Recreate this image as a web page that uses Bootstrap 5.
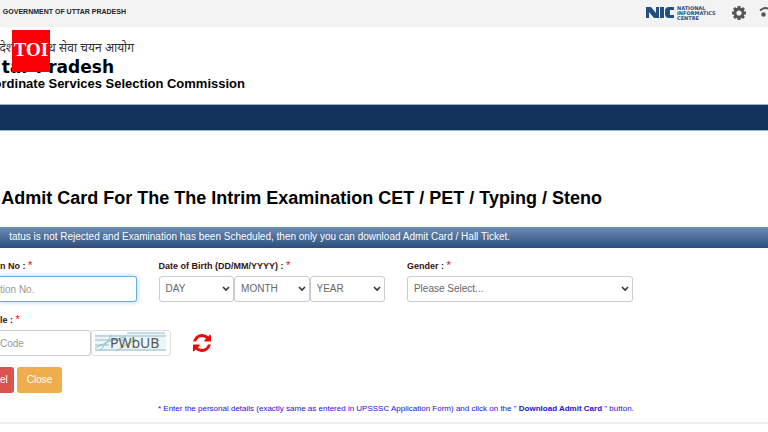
<!DOCTYPE html>
<html lang="en">
<head>
<meta charset="utf-8">
<meta name="viewport" content="width=device-width, initial-scale=1">
<title>Download Admit Card</title>
<link href="https://cdn.jsdelivr.net/npm/bootstrap@5.3.0/dist/css/bootstrap.min.css" rel="stylesheet">
<style>
body{font-family:"Liberation Sans",Arial,"Noto Sans",sans-serif;font-size:10px;line-height:16px;color:#000;overflow-x:hidden}
.topbar{height:27px;background:#f3f3f3}
.gov{width:126px;font-size:7px;font-weight:700;line-height:24px;color:#222}
.nic-logo{width:74px;height:16px}
.tools{gap:12px;height:25px}
.brand-area{height:77px;padding-top:11px}
.brand-hi{width:134px;font-size:12px;line-height:20px;color:#333}
.brand-state{width:114px;font:700 17px/18px "DejaVu Sans",sans-serif}
.brand-name{width:245px;font-size:13px;font-weight:700;line-height:16px}
.toi{left:12px;top:3px;width:38px;height:42px;background:#fb0007;color:#fff;font:700 19px/40px "Liberation Serif",serif}
.menu{height:27px;background:#11325a;border-top:1px solid #9bb3cc;border-bottom:1px solid #9bb3cc}
.page-title{width:602px;margin-top:56px;font-size:18px;line-height:22px;font-weight:700}
.notice{margin-top:18px;height:21px;line-height:20px;background:linear-gradient(#6d8fb5,#2a4c7b);color:#fff}
.notice span{width:510px}
.fields{display:grid;grid-template-columns:137fr 227fr 227fr 113fr;column-gap:22px;padding-top:11px}
.fields label{font-size:9px;font-weight:700;line-height:14px;margin-bottom:3px;color:#311;display:block}
.req{color:#e00;font-size:11px;line-height:10px;font-weight:400}
.ctl{height:26px;font-size:10px;line-height:16px;color:#666;border:1px solid #ccc;border-radius:3px;background-color:#fff;padding:4px 6px;min-width:0}
select.ctl{appearance:none;background-image:url("data:image/svg+xml,%3Csvg xmlns='http://www.w3.org/2000/svg' viewBox='0 0 8 6'%3E%3Cpath d='M1 1l3 3 3-3' fill='none' stroke='%23333' stroke-width='1.6'/%3E%3C/svg%3E");background-repeat:no-repeat;background-position:right 3px center;background-size:8px 6px}
.ctl::placeholder{color:#999}
.cut{border-left:0;border-top-left-radius:0;border-bottom-left-radius:0;padding-left:0}
.active-field{border-color:#66afe9;box-shadow:0 0 5px #66afe999}
.code-row{margin-top:11px}
.code-field{width:91px}
.captcha{width:80px;height:26px;border:1px solid #ddd;border-radius:3px}
.reload{width:18px;height:18px;margin-left:22px}
.actions{gap:3px;margin-top:11px}
.action{height:26px;font-size:10px;line-height:16px;border-radius:3px;color:#fff}
.cancel{background:#d9534f;padding:4px 6px 4px 0;border-top-left-radius:0;border-bottom-left-radius:0}
.close-btn{background:#f0ad4e;padding:4px 10px}
.hint{font-size:8px;line-height:14px;color:#1d10d8;margin-top:9px;padding-left:158px}
.rule{height:2px;background:#eee;margin-top:6px}
</style>
<script src="https://cdn.jsdelivr.net/npm/bootstrap@5.3.0/dist/js/bootstrap.bundle.min.js"></script>
</head>
<body>
<header>
  <div class="topbar d-flex justify-content-between overflow-hidden">
    <div class="gov d-flex justify-content-end text-nowrap"><span>GOVERNMENT OF UTTAR PRADESH</span></div>
    <div class="tools d-flex align-items-center">
      <svg class="nic-logo" viewBox="0 0 74 16" role="img" aria-label="National Informatics Centre">
        <path d="M1 2h5l5 6V2h3v11H9L4 7v6H1zM15 2h4v11h-4zM29 2v3h-4v5h4v3h-5q-4 0-4-4V6q0-4 4-4z" fill="#24507f"/>
        <g fill="#24507f" font-family="DejaVu Sans, sans-serif" font-size="5" font-weight="700"><text x="32" y="5">NATIONAL</text><text x="32" y="10">INFORMATICS</text><text x="32" y="15">CENTRE</text></g>
      </svg>
      <svg width="16" height="16" viewBox="0 0 16 16" role="img" aria-label="Settings"><g fill="#555"><path fill-rule="evenodd" d="M8 2.500a5.500 5.500 0 1 0 0 11 5.500 5.500 0 0 0 0-11zM8 5.400a2.600 2.600 0 1 1 0 5.200 2.600 2.600 0 0 1 0-5.200z"/><g id="t"><path d="M6.500 1h3v3h-3zM6.500 12h3v3h-3zM1 6.500h3v3H1zM12 6.500h3v3h-3z"/></g><use href="#t" transform="rotate(45 8 8)"/></g></svg>
      <svg width="9" height="16" viewBox="0 0 9 16" aria-hidden="true"><path d="M1 5.500Q5 2 9 3.500" fill="none" stroke="#555" stroke-width="2"/><circle cx="4.500" cy="9.500" r="2.200" fill="#555"/></svg>
    </div>
  </div>
  <div class="brand-area position-relative overflow-hidden">
    <div class="brand-hi d-flex justify-content-end text-nowrap" lang="hi"><span>देश अधीनस्थ सेवा चयन आयोग</span></div>
    <div class="brand-state d-flex justify-content-end text-nowrap"><span>tar Pradesh</span></div>
    <div class="brand-name d-flex justify-content-end text-nowrap"><span>ordinate Services Selection Commission</span></div>
    <div class="toi position-absolute text-center">TOI</div>
  </div>
  <nav class="menu" aria-label="Main"></nav>
</header>
<main>
  <h1 class="page-title d-flex justify-content-end text-nowrap mb-0"><span>Admit Card For The The Intrim Examination CET / PET / Typing / Steno</span></h1>
  <div class="notice"><span class="d-flex justify-content-end text-nowrap">tatus is not Rejected and Examination has been Scheduled, then only you can download Admit Card / Hall Ticket.</span></div>
  <form>
    <div class="fields">
      <div>
        <label for="reg">n No : <span class="req">*</span></label>
        <input id="reg" class="ctl cut active-field w-100" type="text" placeholder="tion No.">
      </div>
      <div>
        <label for="day">Date of Birth (DD/MM/YYYY) : <span class="req">*</span></label>
        <div class="d-flex">
          <select id="day" class="ctl w-100"><option>DAY</option></select>
          <select class="ctl w-100" aria-label="Month"><option>MONTH</option></select>
          <select class="ctl w-100" aria-label="Year"><option>YEAR</option></select>
        </div>
      </div>
      <div>
        <label for="gender">Gender : <span class="req">*</span></label>
        <select id="gender" class="ctl w-100"><option>Please Select...</option></select>
      </div>
    </div>
    <div class="fields code-row pt-0">
      <div>
        <label for="code">le : <span class="req">*</span></label>
        <div class="d-flex align-items-center">
          <input id="code" class="ctl cut code-field flex-shrink-0" type="text" placeholder="Code">
          <svg class="captcha flex-shrink-0" viewBox="0 0 78 24" role="img" aria-label="Captcha">
            <rect x="3" y="3" width="71" height="17" fill="#edf5f6"/>
            <path d="M3 5h71M35 2h38M3 9h30M3 14h14M3 19h71M8 20L20 4M3 17Q20 8 34 6M24 20L44 8" fill="none" stroke="#8fbccb"/>
            <text x="18" y="17" font-family="Noto Sans, sans-serif" font-size="14" fill="#555">PWbUB</text>
          </svg>
          <a href="#" class="d-flex" aria-label="Reload code"><svg class="reload" viewBox="0 0 1536 1536"><path fill="#e80c0c" d="M1511 928q0 5-1 7-64 268-268 434.500T764 1536q-146 0-282.500-55T238 1324l-129 129q-19 19-45 19t-45-19-19-45V960q0-26 19-45t45-19h448q26 0 45 19t19 45-19 45l-137 137q71 66 161 102t187 36q134 0 250-65t186-179q11-17 53-117 8-23 30-23h192q13 0 22.500 9.500t9.500 22.500zm25-800v448q0 26-19 45t-45 19h-448q-26 0-45-19t-19-45 19-45l138-138Q969 256 768 256q-134 0-250 65T332 500q-11 17-53 117-8 23-30 23H50q-13 0-22.500-9.500T18 608v-7q65-268 270-434.500T768 0q146 0 284 55.500T1297 212l130-129q19-19 45-19t45 19 19 45z"/></svg></a>
        </div>
      </div>
    </div>
    <div class="actions d-flex">
      <button type="button" class="btn border-0 action cancel">el</button>
      <button type="button" class="btn border-0 action close-btn">Close</button>
    </div>
    <p class="hint mb-0 text-nowrap">* Enter the personal details (exactly same as entered in UPSSSC Application Form) and click on the " <b>Download Admit Card</b> " button.</p>
  </form>
  <div class="rule"></div>
</main>
</body>
</html>
